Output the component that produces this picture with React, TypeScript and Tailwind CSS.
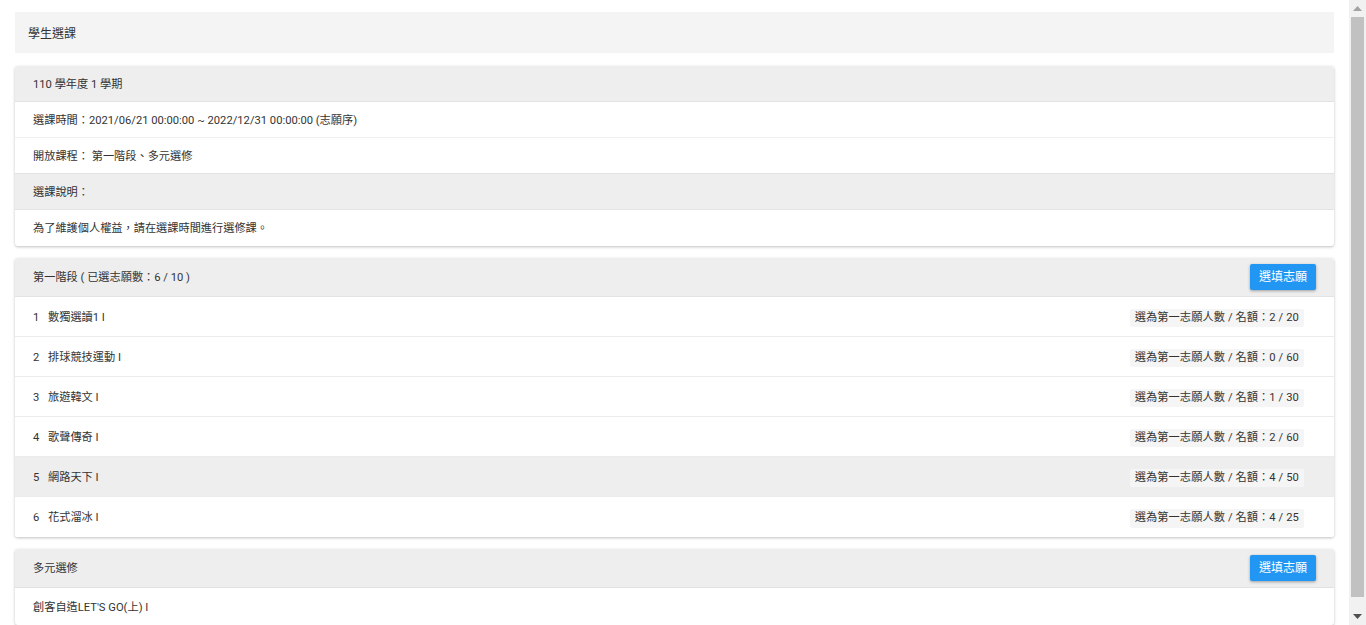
import React from "react";

const courses = [
  { n: 1, name: "數獨選讀1 I", count: "2 / 20", gray: false },
  { n: 2, name: "排球競技運動 I", count: "0 / 60", gray: false },
  { n: 3, name: "旅遊韓文 I", count: "1 / 30", gray: false },
  { n: 4, name: "歌聲傳奇 I", count: "2 / 60", gray: false },
  { n: 5, name: "網路天下 I", count: "4 / 50", gray: true },
  { n: 6, name: "花式溜冰 I", count: "4 / 25", gray: false },
];

function Btn() {
  return (
    <button className="h-[26px] w-[66px] rounded-[2px] bg-[#2196f3] text-[12px] text-white shadow-[0_1px_3px_rgba(0,0,0,0.35)]">
      選填志願
    </button>
  );
}

function Scrollbar() {
  return (
    <div className="sticky top-0 flex h-screen w-[17px] shrink-0 flex-col bg-[#f1f1f1]">
      <div className="flex h-[17px] items-center justify-center">
        <svg width="9" height="5" viewBox="0 0 9 5">
          <path d="M0 5 L4.5 0 L9 5 Z" fill="#a3a3a3" />
        </svg>
      </div>
      <div className="mx-[2px] mb-[11px] flex-1 bg-[#c1c1c1]" />
      <div className="flex h-[17px] items-center justify-center">
        <svg width="9" height="5" viewBox="0 0 9 5">
          <path d="M0 0 L4.5 5 L9 0 Z" fill="#505050" />
        </svg>
      </div>
    </div>
  );
}

export default function App() {
  return (
    <div
      className="flex bg-white text-[11.2px] text-[#333]"
      style={{ fontFamily: 'Roboto, "Noto Sans CJK TC", sans-serif' }}
    >
      <div className="min-w-0 flex-1 px-[15px] pt-[12px] pb-[20px]">
        <div className="flex h-[41px] items-center bg-[#f4f4f4] px-[13px] pt-[2px] text-[12px] text-[#333]">
          學生選課
        </div>

        <div className="mt-[13px] overflow-hidden rounded-[3px] bg-white shadow-[0_1px_3px_rgba(0,0,0,0.25)]">
          <div className="flex h-[36px] items-center border-b border-[#e2e2e2] bg-[#eeeeee] px-[18px] pt-[3px]">
            110 學年度 1 學期
          </div>
          <div className="flex h-[36px] items-center border-b border-[#f0f0f0] px-[18px] pt-[3px]">
            選課時間：2021/06/21 00:00:00 ~ 2022/12/31 00:00:00 (志願序)
          </div>
          <div className="flex h-[36px] items-center border-b border-[#e2e2e2] px-[18px] pt-[3px]">
            開放課程： 第一階段、多元選修
          </div>
          <div className="flex h-[36px] items-center border-b border-[#e2e2e2] bg-[#eeeeee] px-[18px] pt-[3px]">
            選課說明：
          </div>
          <div className="flex h-[36px] items-center px-[18px] pt-[3px]">
            為了維護個人權益，請在選課時間進行選修課。
          </div>
        </div>

        <div className="mt-[12px] overflow-hidden rounded-[3px] bg-white shadow-[0_1px_3px_rgba(0,0,0,0.25)]">
          <div className="flex h-[39px] items-center justify-between border-b border-[#e2e2e2] bg-[#eeeeee] pl-[18px] pr-[18px]">
            <span className="pt-[3px]">第一階段 ( 已選志願數：6 / 10 )</span>
            <Btn />
          </div>
          {courses.map((c, i) => (
            <div
              key={c.n}
              className={
                "flex h-[40px] items-center justify-between pl-[18px] pr-[30px] pt-[3px] " +
                (i < courses.length - 1 ? "border-b border-[#ececec] " : "") +
                (c.gray ? "bg-[#eeeeee]" : "bg-white")
              }
            >
              <span>
                <span className="inline-block w-[15px]">{c.n}</span>
                {c.name}
              </span>
              <span className="rounded-[2px] bg-[#f5f5f5] px-[5px] py-[1px] tracking-[0.1px] text-[#333]">
                選為第一志願人數 / 名額：{c.count}
              </span>
            </div>
          ))}
        </div>

        <div className="mt-[12px] overflow-hidden rounded-[3px] bg-white shadow-[0_1px_3px_rgba(0,0,0,0.25)]">
          <div className="flex h-[39px] items-center justify-between border-b border-[#e2e2e2] bg-[#eeeeee] pl-[18px] pr-[18px]">
            <span className="pt-[3px]">多元選修</span>
            <Btn />
          </div>
          <div className="flex h-[37px] items-center px-[18px] pt-[3px]">創客自造LET'S GO(上) I</div>
        </div>
      </div>
      <Scrollbar />
    </div>
  );
}
